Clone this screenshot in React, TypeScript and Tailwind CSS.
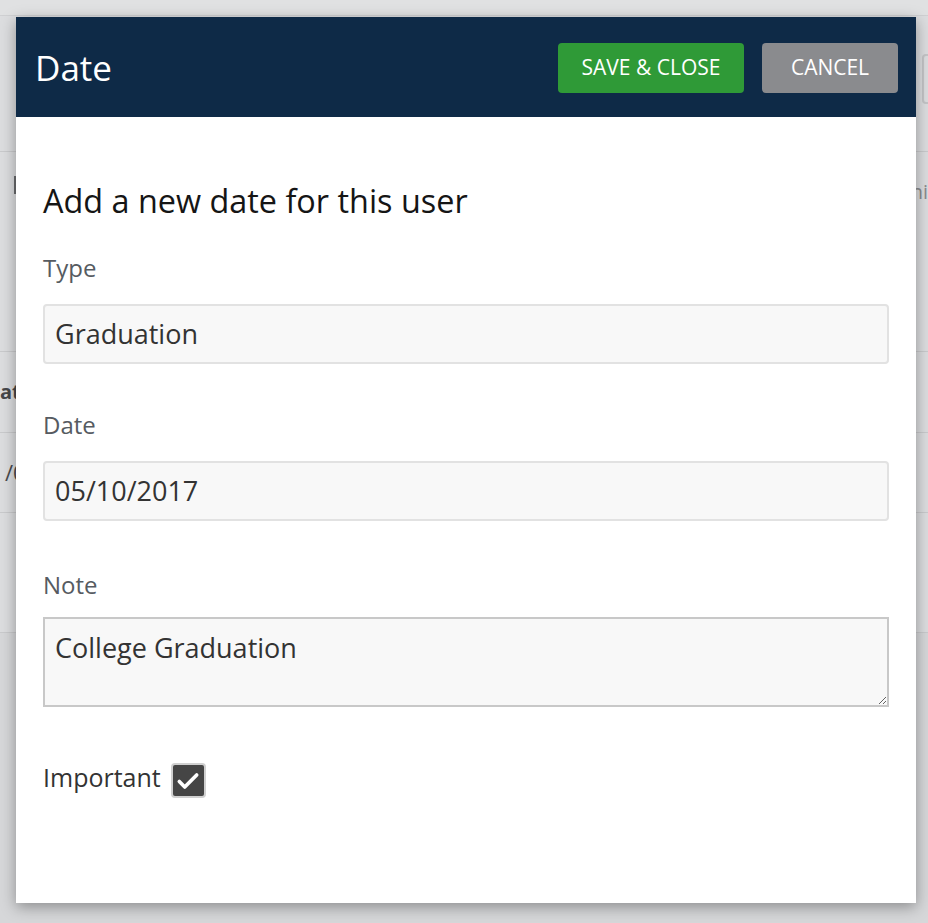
import React from "react";

function Field({ label, value, mt }: { label: string; value: string; mt: string }) {
  return (
    <div className="flex flex-col">
      <div className={`${mt} text-[24px] leading-[30px] text-[#565b61]`}>{label}</div>
      <div className="mt-[21px] h-[60px] rounded-[4px] border-2 border-[#e2e2e2] bg-[#f8f8f8] px-[10px] flex items-center text-[27px] text-[#333333]">
        {value}
      </div>
    </div>
  );
}

export default function App() {
  return (
    <div className="relative w-[928px] h-[923px] overflow-hidden bg-[#d9dadc] font-['Open_Sans',sans-serif]">
      {/* backdrop page */}
      <div className="flex flex-col">
        <div className="h-[16px] bg-[#e0e1e2] border-b border-[#cfd0d2]" />
        <div className="h-[136px] border-b border-[#c9cacc] bg-[#dcdddf] flex justify-end items-start">
          <div className="mt-[38px] mr-[-20px] w-[26px] h-[50px] rounded-[4px] border-2 border-[#c4c5c7]" />
        </div>
        <div className="h-[200px] border-b border-[#c9cacc] bg-[#dcdddf] flex justify-between items-start">
          <div className="mt-[24px] ml-[14px] w-[2px] h-[18px] bg-[#6a6b6d]" />
          <div className="mt-[28px] mr-[0px] text-[20px] leading-[24px] text-[#8a8b8d]">ni</div>
        </div>
        <div className="h-[81px] border-b border-[#c9cacc] bg-[#dcdddf] flex items-center">
          <div className="ml-[0px] text-[20px] font-bold text-[#46474a]">at</div>
        </div>
        <div className="h-[80px] border-b border-[#c9cacc] bg-[#dcdddf] flex items-center">
          <div className="ml-[5px] text-[22px] text-[#4a4b4e]">/0</div>
        </div>
        <div className="h-[120px] border-b border-[#c9cacc] bg-[#dcdddf]" />
        <div className="h-[290px] bg-[#d6d7d9]" />
      </div>

      {/* modal */}
      <div className="absolute left-[16px] top-[17px] w-[900px] h-[886px] bg-white shadow-[0_4px_14px_rgba(0,0,0,0.35)] flex flex-col">
        <div className="h-[100px] bg-[#0e2a47] flex items-center justify-between pl-[19px] pr-[18px]">
          <div className="text-[35px] leading-none text-white">Date</div>
          <div className="flex items-center gap-[18px] mt-[1px]">
            <button className="w-[186px] h-[50px] rounded-[4px] bg-[#2f9a37] text-white text-[21px] uppercase">
              SAVE &amp; CLOSE
            </button>
            <button className="w-[136px] h-[50px] rounded-[4px] bg-[#8a8b8e] text-white text-[21px] uppercase">
              CANCEL
            </button>
          </div>
        </div>

        <div className="px-[27px] flex flex-col">
          <div className="mt-[64px] text-[32.4px] leading-[38px] text-[#151515]">Add a new date for this user</div>

          <Field label="Type" value="Graduation" mt="mt-[34px]" />
          <Field label="Date" value="05/10/2017" mt="mt-[46px]" />

          <div className="mt-[49px] text-[24px] leading-[30px] text-[#565b61]">Note</div>
          <textarea
            readOnly
            defaultValue="College Graduation"
            className="mt-[17px] h-[90px] w-full border-2 border-[#c8c8c8] bg-[#f8f8f8] px-[10px] pt-[11px] text-[27px] leading-[36px] text-[#333333] outline-none resize-y"
          />

          <div className="mt-[56px] flex items-start gap-[10px]">
            <div className="-mt-[1px] text-[25px] leading-[30px] text-[#333333]">Important</div>
            <div className="w-[35px] h-[35px] rounded-[4px] border-2 border-[#d0d0d0] bg-[#454545] flex items-center justify-center">
              <svg width="26" height="26" viewBox="0 0 24 24" fill="none">
                <path d="M4 12.5l5 5L20 6.5" stroke="white" strokeWidth="3.4" strokeLinecap="round" strokeLinejoin="round" />
              </svg>
            </div>
          </div>
        </div>
      </div>
    </div>
  );
}
